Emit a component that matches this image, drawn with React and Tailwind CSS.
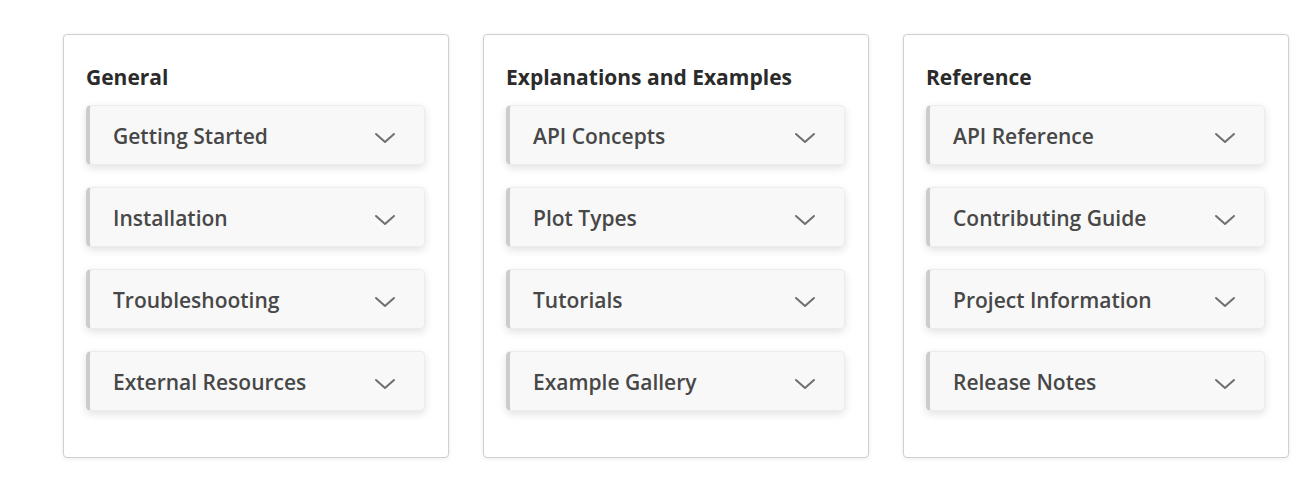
const sections = [
  {
    title: 'General',
    items: ['Getting Started', 'Installation', 'Troubleshooting', 'External Resources'],
  },
  {
    title: 'Explanations and Examples',
    items: ['API Concepts', 'Plot Types', 'Tutorials', 'Example Gallery'],
  },
  {
    title: 'Reference',
    items: ['API Reference', 'Contributing Guide', 'Project Information', 'Release Notes'],
  },
]

function Chevron() {
  return (
    <svg width="22" height="12" viewBox="0 0 22 12" fill="none" className="shrink-0 mt-[6px]">
      <path d="M2 2 L11 10 L20 2" stroke="#6f6f6f" strokeWidth="2" strokeLinecap="round" strokeLinejoin="round" />
    </svg>
  )
}

export default function App() {
  return (
    <div
      className="min-h-[491px] bg-white pl-[63px] pt-[34px] flex gap-[34px]"
      style={{ fontFamily: '"Open Sans", "Noto Sans", sans-serif' }}
    >
      {sections.map((section) => (
        <section
          key={section.title}
          className="w-[386px] h-[424px] border border-[#cfcfcf] rounded-[4px] bg-white shadow-[0_1px_4px_rgba(0,0,0,0.08)] pt-[27px] pl-[22px] pr-[23px]"
        >
          <h2 className="m-0 text-[21px] leading-[30px] font-bold text-[#2b2b2b] mb-[13px]">{section.title}</h2>
          <div className="flex flex-col gap-[22px]">
            {section.items.map((item) => (
              <div
                key={item}
                className="h-[60px] flex items-center justify-between bg-[#f8f8f8] border border-[#ececec] border-l-[4px] border-l-[#cccccc] rounded-[5px] shadow-[0_3px_8px_rgba(0,0,0,0.12)] pl-[23px] pr-[28px]"
              >
                <span className="text-[21px] font-semibold text-[#474747] mt-[3px]">{item}</span>
                <Chevron />
              </div>
            ))}
          </div>
        </section>
      ))}
    </div>
  )
}
